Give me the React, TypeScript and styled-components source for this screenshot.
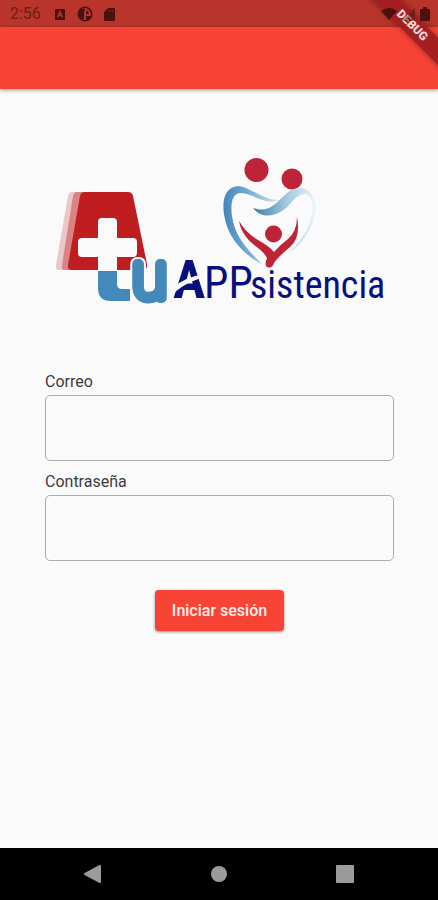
import React from "react";
import styled, { createGlobalStyle } from "styled-components";

const GlobalStyle = createGlobalStyle`
  * { box-sizing: border-box; }
  body {
    margin: 0;
    background: #fafafa;
    font-family: Roboto, "Liberation Sans", sans-serif;
  }
`;

const Screen = styled.div`
  position: relative;
  display: flex;
  flex-direction: column;
  min-height: 100vh;
  overflow: hidden;
  background: #fafafa;
`;

const StatusBar = styled.div`
  display: flex;
  align-items: center;
  justify-content: space-between;
  height: 27px;
  padding: 1px 8px 0 10px;
  background: #b9342b;
  color: #4a120f;
`;

const StatusGroup = styled.div<{ $gap: number }>`
  position: relative;
  z-index: 1;
  display: flex;
  align-items: center;
  gap: ${(p) => p.$gap}px;
  svg { display: block; }
`;

const Clock = styled.span`
  font-size: 16px;
  line-height: 20px;
  margin-right: 2px;
  color: #6b1d18;
`;

const AppBar = styled.header`
  height: 62px;
  background: #f74435;
  box-shadow: 0 1px 4px rgba(0, 0, 0, 0.4);
`;

const RibbonCorner = styled.div`
  position: absolute;
  top: 0;
  right: 0;
  width: 80px;
  height: 80px;
  overflow: hidden;
  pointer-events: none;
`;

const Ribbon = styled.span`
  position: absolute;
  top: 16px;
  right: -34px;
  width: 120px;
  height: 19px;
  transform: rotate(45deg);
  background: #a61f20;
  box-shadow: 0 0 6px rgba(0, 0, 0, 0.4);
  color: #f5dcdc;
  font-size: 12px;
  font-weight: 900;
  line-height: 19px;
  text-align: center;
`;

const Content = styled.main`
  flex: 1;
  display: flex;
  flex-direction: column;
  padding: 61px 44px 0 45px;
`;

const Logo = styled.svg`
  display: block;
  width: 100%;
  height: auto;
  overflow: visible;
`;

const Form = styled.form`
  display: flex;
  flex-direction: column;
  margin-top: 61px;
`;

const Field = styled.div`
  display: flex;
  flex-direction: column;
  gap: 2px;
  margin-bottom: 10px;
`;

const Label = styled.label`
  font-size: 16px;
  line-height: 22px;
  color: #3c3c3c;
`;

const Input = styled.input`
  width: 100%;
  height: 66px;
  padding: 0 12px;
  border: 1px solid #adadad;
  border-radius: 5px;
  background: transparent;
  font: inherit;
  font-size: 16px;
  outline: none;
`;

const Submit = styled.button`
  align-self: center;
  height: 41px;
  margin-top: 19px;
  padding: 0 17px;
  border: 0;
  border-radius: 4px;
  background: #f74435;
  box-shadow: 0 1px 3px rgba(0, 0, 0, 0.45);
  color: #fff0ee;
  font: 500 16px/20px Roboto, sans-serif;
`;

const NavBar = styled.nav`
  display: flex;
  justify-content: space-between;
  align-items: center;
  height: 52px;
  padding: 0 83px 0 82px;
  background: #000;
`;

const NavButton = styled.button`
  display: flex;
  padding: 0;
  border: 0;
  background: none;
  color: #9b9b9b;
`;

function BrandLogo() {
  return (
    <Logo viewBox="45 150 349 160" role="img" aria-label="Tu APPsistencia">
      <defs>
        <linearGradient id="leftHeart" x1="0" y1="0" x2="1" y2="0">
          <stop offset="0" stopColor="#4586b9" />
          <stop offset="0.45" stopColor="#76add1" />
          <stop offset="1" stopColor="#d5e6f0" />
        </linearGradient>
        <linearGradient id="rightHeart" x1="0" y1="0" x2="1" y2="0">
          <stop offset="0" stopColor="#397cad" />
          <stop offset="0.5" stopColor="#9bc5dc" />
          <stop offset="1" stopColor="#eef6fa" />
        </linearGradient>
      </defs>

      <g fill="#c01d20">
        <path opacity="0.23" d="M72 192H122Q126 192 127 196L138 265Q139 270 134 270H59Q55 270 56 265L68 196Q69 192 72 192Z" />
        <path opacity="0.4" d="M77 192H125Q129 192 130 196L141 265Q142 270 137 270H65Q61 270 62 265L73 196Q74 192 77 192Z" />
        <path d="M85 192H128Q132 192 133 196L147 264Q148 270 142 270H72Q67 270 68 265L80 196Q81 192 85 192Z" />
      </g>
      <path fill="#fafafa" d="M102 218H113Q117 218 117 222V238H133Q137 238 137 242V253Q137 257 133 257H117V271H98V257H82Q78 257 78 253V242Q78 238 82 238H98V222Q98 218 102 218Z" />
      <path fill="#4389ba" d="M98 271H117V284Q117 289 122 289H130V301H111Q98 301 98 288Z" />
      <g fontFamily="Roboto, sans-serif" fontWeight="100" fontSize="64" strokeLinejoin="round">
        <text x="132" y="298" fill="#fafafa" stroke="#fafafa" strokeWidth="14">u</text>
        <text x="132" y="298" fill="#4389ba" stroke="#4389ba" strokeWidth="10">u</text>
      </g>

      <g fill="#bd2438">
        <circle cx="256.500" cy="170" r="12" />
        <circle cx="292" cy="179" r="10.500" />
        <circle cx="273.500" cy="234" r="8.500" />
        <path d="M239 221Q247 234 258 240Q269 246 274 252Q281 244 288 239Q297 231 297 217Q301 238 290 247Q277 258 274 263Q272 269 267 267Q264 265 267 258C262 247 243 243 239 221Z" />
      </g>
      <path fill="url(#leftHeart)" d="M280 200C264 201 252 188 239 186C224 186 221 203 225 219C229 240 247 257 262 264C247 249 235 237 232 216C230 202 233 193 241 193C253 193 264 206 280 200Z" />
      <path fill="url(#rightHeart)" d="M253 208C264 222 282 214 290 204C297 196 306 188 312 201C316 219 302 242 288 254C304 243 317 222 316 205C313 187 298 184 287 193C274 205 269 213 253 208Z" />

      <g fill="#07107d" fontFamily="'Roboto Condensed', Roboto, sans-serif">
        <text x="173" y="298" fontSize="54" fontWeight="700">A</text>
        <text x="204" y="298" fontSize="44">PP</text>
        <text x="250" y="298" fontSize="38">sistencia</text>
      </g>
      <path d="M173 288Q184 277 205 274V277Q188 281 175 292Z" fill="#fafafa" />
    </Logo>
  );
}

export default function App() {
  return (
    <>
      <GlobalStyle />
      <Screen>
        <StatusBar>
          <StatusGroup $gap={11}>
            <Clock>2:56</Clock>
            <svg width="12" height="12" viewBox="0 0 12 12" aria-hidden="true">
              <rect x="1" y="1" width="10" height="11" rx="1" fill="currentColor" />
              <path d="M3.500 9.500L6 3.500L8.500 9.500M4.500 7.500H7.500" fill="none" stroke="#b9342b" strokeWidth="1.300" />
            </svg>
            <svg width="16" height="16" viewBox="0 0 16 16" aria-hidden="true">
              <circle cx="8" cy="8" r="6.700" fill="none" stroke="currentColor" strokeWidth="1.600" />
              <path d="M3 3H8V5H7V13L4 13L1 8Z" fill="currentColor" />
              <path d="M9 5H11.500V8H9Z" fill="currentColor" />
              <path d="M9 10H14L12 13L9 14Z" fill="currentColor" />
            </svg>
            <svg width="12" height="14" viewBox="0 0 12 14" aria-hidden="true">
              <path d="M4 1H10Q11 1 11 2V13Q11 14 10 14H1Q0 14 0 13V5Z" fill="currentColor" />
              <path d="M4.500 3V5M6.500 3V5M8.500 3V5" stroke="#812019" />
            </svg>
          </StatusGroup>
          <StatusGroup $gap={5}>
            <svg width="16" height="12" viewBox="0 0 16 12" aria-hidden="true">
              <path d="M0 3Q8 -3 16 3L8 12Z" fill="currentColor" />
            </svg>
            <svg width="13" height="13" viewBox="0 0 13 13" aria-hidden="true">
              <path d="M13 0V13H0Z" fill="currentColor" opacity="0.5" />
            </svg>
            <svg width="10" height="14" viewBox="0 0 10 14" aria-hidden="true">
              <path d="M3 0H7V2H9Q10 2 10 3V13Q10 14 9 14H1Q0 14 0 13V3Q0 2 1 2H3Z" fill="currentColor" />
            </svg>
          </StatusGroup>
        </StatusBar>
        <AppBar />
        <Content>
          <BrandLogo />
          <Form onSubmit={(e) => e.preventDefault()}>
            <Field>
              <Label htmlFor="correo">Correo</Label>
              <Input id="correo" type="email" />
            </Field>
            <Field>
              <Label htmlFor="contrasena">Contraseña</Label>
              <Input id="contrasena" type="password" />
            </Field>
            <Submit type="submit">Iniciar sesión</Submit>
          </Form>
        </Content>
        <NavBar>
          <NavButton type="button" aria-label="Atrás">
            <svg width="20" height="20" viewBox="0 0 20 20">
              <path d="M18 2V18L3 10Z" fill="currentColor" stroke="currentColor" strokeWidth="2" strokeLinejoin="round" />
            </svg>
          </NavButton>
          <NavButton type="button" aria-label="Inicio">
            <svg width="18" height="18" viewBox="0 0 18 18">
              <circle cx="9" cy="9" r="8" fill="currentColor" />
            </svg>
          </NavButton>
          <NavButton type="button" aria-label="Recientes">
            <svg width="20" height="20" viewBox="0 0 20 20">
              <rect x="1" y="1" width="18" height="18" rx="1" fill="currentColor" />
            </svg>
          </NavButton>
        </NavBar>
        <RibbonCorner>
          <Ribbon>DEBUG</Ribbon>
        </RibbonCorner>
      </Screen>
    </>
  );
}
